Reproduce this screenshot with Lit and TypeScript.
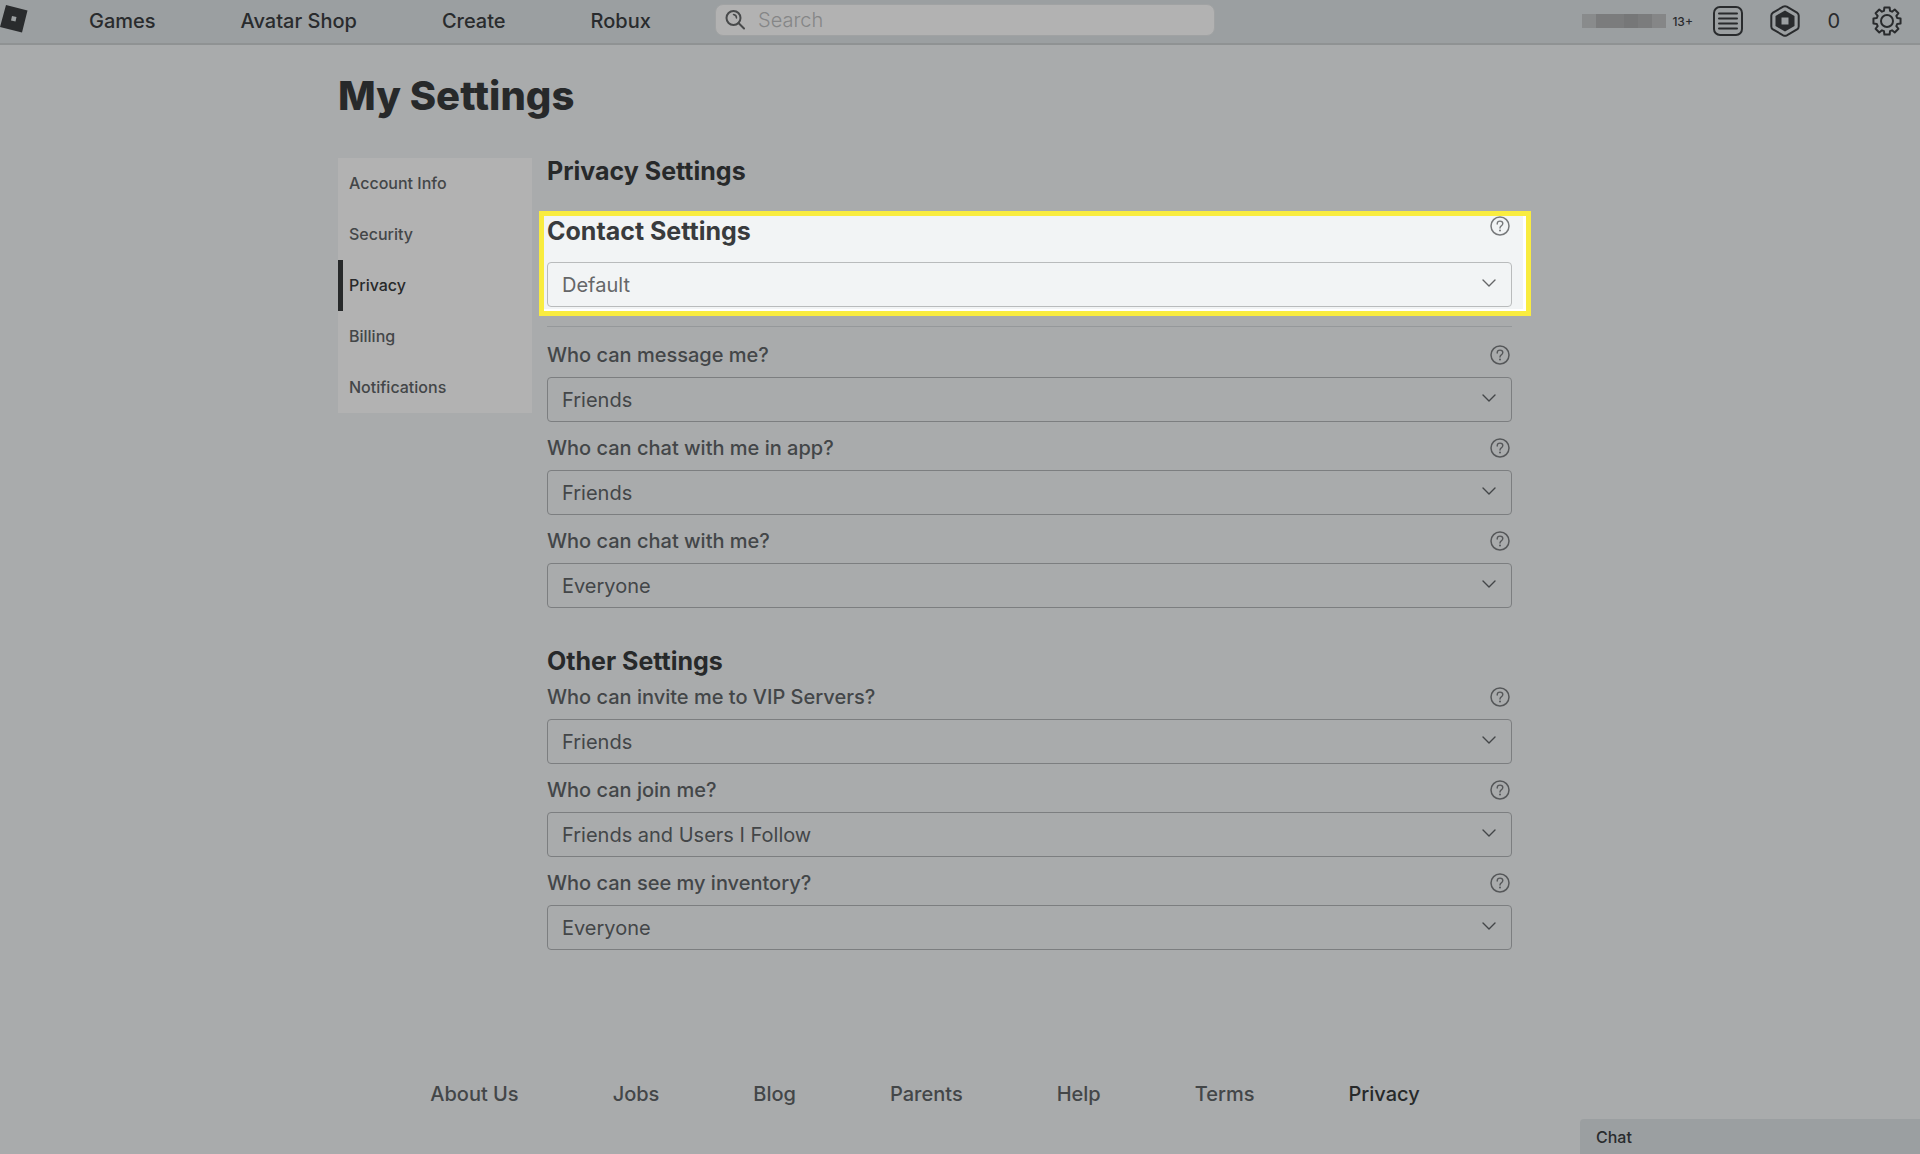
import { LitElement, html, css, svg } from "lit";
import { customElement } from "lit/decorators.js";
import { classMap } from "lit/directives/class-map.js";

interface Setting {
  id: string;
  label: string;
  value: string;
}

const CHOICES = ["Everyone", "Friends and Users I Follow", "Friends", "No one"];

const CONTACT: Setting[] = [
  { id: "message", label: "Who can message me?", value: "Friends" },
  { id: "app-chat", label: "Who can chat with me in app?", value: "Friends" },
  { id: "chat", label: "Who can chat with me?", value: "Everyone" },
];

const OTHER: Setting[] = [
  { id: "vip", label: "Who can invite me to VIP Servers?", value: "Friends" },
  { id: "join", label: "Who can join me?", value: "Friends and Users I Follow" },
  { id: "inventory", label: "Who can see my inventory?", value: "Everyone" },
];

// Outline of an eight-toothed gear centred on (15, 15).
function gearPath(): string {
  const points: string[] = [];
  const teeth = 8;
  for (let i = 0; i < teeth; i++) {
    const mid = (i * 2 * Math.PI) / teeth - Math.PI / 2;
    const corners: [number, number][] = [
      [10.6, -0.29],
      [13.8, -0.19],
      [13.8, 0.19],
      [10.6, 0.29],
    ];
    for (const [r, a] of corners) {
      points.push(`${(15 + r * Math.cos(mid + a)).toFixed(2)} ${(15 + r * Math.sin(mid + a)).toFixed(2)}`);
    }
  }
  return `M${points.join("L")}Z`;
}

const logoIcon = html`<svg width="28" height="28" viewBox="0 0 28 28" aria-hidden="true">
  <path fill="currentColor" fill-rule="evenodd" d="M6 0L27.500 5.500L22 27.500L0 22ZM12 11L11 15.500L15.500 16.500L16.500 12Z" />
</svg>`;

const searchIcon = html`<svg class="search-icon" width="20" height="20" viewBox="0 0 20 20" fill="none" stroke="currentColor" stroke-width="2" aria-hidden="true">
  <circle cx="8.500" cy="8" r="7" />
  <path d="M13.500 13L19 18.500" stroke-linecap="round" />
  <path d="M8.500 4.500Q11.500 5 11.500 8" stroke-width="1.500" stroke-linecap="round" />
</svg>`;

const feedIcon = html`<svg width="30" height="30" viewBox="0 0 30 30" fill="none" stroke="currentColor" stroke-width="2" aria-hidden="true">
  <rect x="1" y="1" width="28" height="28" rx="6" />
  <path d="M6 7.500H24M6 12.500H24M6 17.500H24M6 22.500H24" stroke-linecap="round" />
</svg>`;

const robuxIcon = html`<svg width="30" height="32" viewBox="0 0 30 32" aria-hidden="true">
  <path d="M13.200 1.700Q15 .8 16.800 1.700L27 7.600Q28.700 8.700 28.700 10.600V21.400Q28.700 23.300 27 24.400L16.800 30.300Q15 31.200 13.200 30.300L3 24.400Q1.300 23.300 1.300 21.400V10.600Q1.300 8.700 3 7.600Z" fill="none" stroke="currentColor" stroke-width="2" />
  <path fill="currentColor" fill-rule="evenodd" d="M15 5.500L24.500 10.900V21.100L15 26.500L5.500 21.100V10.900ZM11.500 12.500V19.500H18.500V12.500Z" />
</svg>`;

const gearIcon = html`<svg width="30" height="30" viewBox="0 0 30 30" fill="none" stroke="currentColor" stroke-width="2" stroke-linejoin="round" aria-hidden="true">
  ${svg`<path d=${gearPath()} />`}
  <circle cx="15" cy="15" r="6" />
</svg>`;

const helpIcon = html`<svg width="20" height="20" viewBox="0 0 20 20" fill="none" stroke="currentColor" aria-hidden="true">
  <circle cx="10" cy="10" r="9" stroke-width="1.500" />
  <path d="M7.200 8Q7.200 5.100 10 5.100Q12.800 5.100 12.800 7.600Q12.800 9 11.300 9.800Q10 10.500 10 12" stroke-width="1.400" stroke-linecap="round" />
  <circle cx="10" cy="14.500" r="1" fill="currentColor" stroke="none" />
</svg>`;

const chevron = html`<svg class="chevron" width="14" height="8" viewBox="0 0 14 8" fill="none" stroke="currentColor" stroke-width="1.400" stroke-linecap="round" stroke-linejoin="round" aria-hidden="true">
  <path d="M1 1L7 7L13 1" />
</svg>`;

@customElement("app-root")
export class AppRoot extends LitElement {
  static styles = css`
    :host {
      display: block;
      min-height: 100vh;
      background: #a9abac;
      color: #434648;
      font-family: Inter, "Liberation Sans", sans-serif;
      font-size: 20px;
    }
    *,
    *::before {
      box-sizing: border-box;
    }
    a {
      color: inherit;
      text-decoration: none;
    }
    button {
      display: flex;
      padding: 0;
      border: 0;
      background: none;
      color: inherit;
      font: inherit;
      cursor: pointer;
    }
    .topbar {
      display: flex;
      align-items: flex-start;
      justify-content: space-between;
      height: 45px;
      padding-right: 18px;
      border-bottom: 2px solid #8f9293;
      background: #9b9fa1;
      color: #292b2d;
    }
    .topnav {
      display: flex;
      flex: 0 0 715px;
      align-items: center;
      height: 42px;
      font-weight: 500;
    }
    .brand {
      display: flex;
      width: 89px;
      padding-bottom: 4px;
    }
    .links {
      display: flex;
      gap: 85px;
    }
    .search {
      display: flex;
      flex: 0 1 500px;
      align-items: center;
      gap: 13px;
      height: 32px;
      margin: 4px auto 0 0;
      padding: 0 9px;
      border: 1px solid #a0a2a3;
      border-radius: 8px;
      background: #b2b2b2;
    }
    .search-icon {
      flex: none;
      color: #484a4b;
    }
    .search input {
      flex: 1;
      min-width: 0;
      padding: 0;
      border: 0;
      outline: 0;
      background: none;
      color: #292b2d;
      font: inherit;
      font-weight: 300;
    }
    .search input::placeholder {
      color: #858687;
      opacity: 1;
    }
    .account {
      display: flex;
      align-items: center;
      height: 42px;
    }
    .name {
      width: 84px;
      height: 14px;
      background: linear-gradient(90deg, #898b8c 0 14px, #7b7c7d 14px 42px, #767778 42px 56px, #7b7c7d 56px 70px, #858687 70px);
    }
    .age {
      width: 47px;
      padding-left: 6px;
      font-size: 12px;
      font-weight: 500;
    }
    .robux {
      gap: 27px;
      align-items: center;
      margin: 0 32px 0 27px;
    }
    .page {
      max-width: 1244px;
      margin: 0 auto;
      padding: 27px 70px 0 0;
    }
    h1 {
      margin: 0 0 38px;
      color: #27292a;
      font-size: 40px;
      font-weight: 800;
      line-height: 48px;
    }
    h2 {
      margin: 0;
      color: #27292a;
      font-size: 25px;
      font-weight: 700;
      line-height: 26px;
    }
    .columns {
      display: flex;
      align-items: flex-start;
      gap: 15px;
    }
    .sidebar {
      flex: 0 0 194px;
      background: #b2b2b2;
      font-size: 16px;
      font-weight: 500;
    }
    .tab {
      display: block;
      padding: 0 11px;
      line-height: 51px;
    }
    .tab.active {
      padding-left: 6px;
      border-left: 5px solid #27292a;
      color: #27292a;
    }
    .content {
      flex: 1;
      min-width: 0;
    }
    .highlight {
      margin: 27px -19px 10px -8px;
      padding: 0 14px 4px 3px;
      border: 5px solid #f9ec3f;
      background: #f2f4f5;
      box-shadow: inset -3px -2px 0 #ffffff;
      color: #656668;
    }
    .head {
      display: flex;
      align-items: center;
      justify-content: space-between;
      height: 30px;
      margin-bottom: 7px;
      padding-right: 2px;
      font-weight: 500;
    }
    .head button {
      color: #555759;
    }
    .highlight .head {
      align-items: flex-start;
      margin-bottom: 16px;
    }
    .highlight .head button {
      color: #77797b;
    }
    .highlight h2 {
      color: #393b3d;
      line-height: 30px;
    }
    .field {
      display: grid;
      align-items: center;
    }
    .field select,
    .chevron {
      grid-area: 1 / 1;
    }
    .chevron {
      justify-self: end;
      margin: 0 16px 4px 0;
      pointer-events: none;
    }
    select {
      width: 100%;
      height: 45px;
      padding: 0 40px 0 14px;
      border: 1px solid #7c7e80;
      border-radius: 4px;
      appearance: none;
      background: transparent;
      color: inherit;
      font: inherit;
      cursor: pointer;
    }
    .highlight select {
      border-color: #b9bbbc;
    }
    .setting {
      margin-bottom: 11px;
    }
    hr {
      height: 1px;
      margin: 0 0 13px;
      border: 0;
      background: #95989a;
    }
    .other {
      margin: 40px 0 8px;
    }
    .footer {
      display: flex;
      justify-content: center;
      gap: 94px;
      margin-top: 118px;
      line-height: 30px;
      font-weight: 500;
    }
    .current {
      color: #27292a;
    }
    .chat {
      position: fixed;
      right: 0;
      bottom: 0;
      width: 340px;
      height: 35px;
      padding: 0 16px;
      align-items: center;
      border-radius: 4px 0 0 0;
      background: #9b9fa1;
      color: #292b2d;
      font-size: 16px;
      font-weight: 500;
    }
  `;

  private help(topic: string) {
    return html`<button type="button" aria-label="Help: ${topic}">${helpIcon}</button>`;
  }

  private field(id: string, value: string, choices: string[]) {
    return html`<div class="field">
      <select id=${id}>
        ${choices.map((c) => html`<option ?selected=${c === value}>${c}</option>`)}
      </select>
      ${chevron}
    </div>`;
  }

  private setting(s: Setting) {
    return html`<div class="setting">
      <div class="head">
        <label for=${s.id}>${s.label}</label>
        ${this.help(s.label)}
      </div>
      ${this.field(s.id, s.value, CHOICES)}
    </div>`;
  }

  render() {
    const top = ["Games", "Avatar Shop", "Create", "Robux"];
    const tabs = ["Account Info", "Security", "Privacy", "Billing", "Notifications"];
    const foot = ["About Us", "Jobs", "Blog", "Parents", "Help", "Terms", "Privacy"];
    return html`
      <header class="topbar">
        <nav class="topnav" aria-label="Main">
          <a class="brand" href="#" aria-label="Home">${logoIcon}</a>
          <div class="links">${top.map((t) => html`<a href="#">${t}</a>`)}</div>
        </nav>
        <label class="search">
          ${searchIcon}
          <input type="search" placeholder="Search" aria-label="Search" />
        </label>
        <div class="account">
          <span class="name"></span>
          <span class="age">13+</span>
          <button type="button" aria-label="Feed">${feedIcon}</button>
          <button class="robux" type="button" aria-label="Robux balance">${robuxIcon}<span>0</span></button>
          <button type="button" aria-label="Settings">${gearIcon}</button>
        </div>
      </header>
      <div class="page">
        <h1>My Settings</h1>
        <div class="columns">
          <nav class="sidebar" aria-label="Settings">
            ${tabs.map((t) => html`<a href="#" class=${classMap({ tab: true, active: t === "Privacy" })}>${t}</a>`)}
          </nav>
          <main class="content">
            <h2>Privacy Settings</h2>
            <section class="highlight">
              <div class="head">
                <h2><label for="contact">Contact Settings</label></h2>
                ${this.help("Contact Settings")}
              </div>
              ${this.field("contact", "Default", ["Default", "Off", "Custom"])}
            </section>
            <hr />
            ${CONTACT.map((s) => this.setting(s))}
            <h2 class="other">Other Settings</h2>
            ${OTHER.map((s) => this.setting(s))}
          </main>
        </div>
        <footer class="footer">
          ${foot.map((t) => html`<a href="#" class=${classMap({ current: t === "Privacy" })}>${t}</a>`)}
        </footer>
      </div>
      <button class="chat" type="button">Chat</button>
    `;
  }
}
